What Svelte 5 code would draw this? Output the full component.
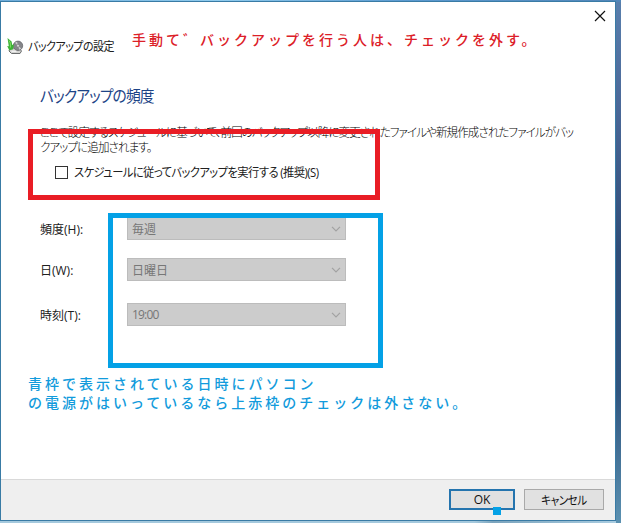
<script lang="ts">
	const fields = [
		{ id: 'frequency', label: '頻度(H):', value: '毎週' },
		{ id: 'day', label: '日(W):', value: '日曜日' },
		{ id: 'time', label: '時刻(T):', value: '19:00' }
	];

	let scheduled = $state(false);
</script>

<div class="desktop">
	<main class="window">
		<div class="titlebar">
			<button class="close" aria-label="閉じる">
				<svg width="12" height="12" viewBox="0 0 12 12">
					<path d="M1 1l10 10M11 1L1 11" stroke="#111" stroke-width="1.2" />
				</svg>
			</button>
		</div>

		<header>
			<svg class="app-icon" width="17" height="17" viewBox="0 0 17 17">
				<path d="M3 10h9l2.5 3-1.5 2.5H4.5L2 13z" fill="#d2d2d0" stroke="#6b6d6e" />
				<path d="M4.5 13.2h5" stroke="#fff" />
				<circle cx="11" cy="7.8" r="4.7" fill="#85868a" stroke="#66676b" stroke-width=".8" />
				<path d="M11 7.8L8 4.7l2-1zM11 7.8l3.3 2.8-2 1.2z" fill="#c9c9cb" />
				<circle cx="11" cy="7.8" r="1.3" fill="#eee" stroke="#666" stroke-width=".5" />
				<path d="M.5 0L4.6 3.5 5.2 7l1.8-.8-1.2 5.3-3.6.8L.2 8l1.6.3z" fill="#3db335" />
				<path d="M2 2.5L3.3 5l.2 4.5" fill="none" stroke="#7fdc62" />
			</svg>
			<span class="title">バックアップの設定</span>
		</header>

		<section class="content">
			<h1>バックアップの頻度</h1>
			<p>
				<span class="line">ここで設定するスケジュールに基づいて、前回のバックアップ以降に変更されたファイルや新規作成されたファイルがバッ</span>
				<span class="line">クアップに追加されます。</span>
			</p>

			<label class="schedule">
				<input type="checkbox" bind:checked={scheduled} />
				<span class="schedule-text">スケジュールに従ってバックアップを実行する (推奨)(S)</span>
			</label>

			<div class="fields">
				{#each fields as field}
					<div class="field {field.id}">
						<span class="label">{field.label}</span>
						<div class="select">
							<span class="value">{field.value}</span>
							<svg width="10" height="6" viewBox="0 0 10 6">
								<path d="M1 .8l4 4 4-4" fill="none" stroke="#a2a2a2" stroke-width="1.2" />
							</svg>
						</div>
					</div>
				{/each}
			</div>
		</section>

		<footer>
			<button class="btn ok">OK</button>
			<button class="btn cancel"><span>キャンセル</span></button>
		</footer>
	</main>

	<div class="frame red"></div>
	<div class="frame blue"></div>
	<div class="handle"></div>
	<div class="note red-note">手動て゛バックアップを行う人は、チェックを外す。</div>
	<div class="note blue-note">
		<div>青枠で表示されている日時にパソコン</div>
		<div>の電源がはいっているなら上赤枠のチェックは外さない。</div>
	</div>
</div>

<style>
	:global(body) {
		overflow: hidden;
	}

	.desktop {
		position: relative;
		box-sizing: border-box;
		width: 621px;
		height: 523px;
		padding: 1px 5px 2px 0;
		background:
			linear-gradient(90deg, #6eabd8, #8fcbed 35%, #5c9bd0 65%, #5286b8) top / 100% 2px no-repeat,
			linear-gradient(90deg, #a5c9dd 77%, #7ba4bd 80%, #a9cce0) left bottom / 616px 3px no-repeat,
			linear-gradient(#597fad, #4b6999 20%, #2f4d78 48%, #30557f 75%, #5b91b1);
		font-family: 'Open Sans', 'Noto Sans CJK JP', sans-serif;
		font-size: 12px;
		color: #202020;
	}

	.window {
		display: flex;
		flex-direction: column;
		box-sizing: border-box;
		height: 520px;
		border: 1px solid #397ba5;
		background: #fff;
	}

	.titlebar {
		display: flex;
		justify-content: flex-end;
		height: 28px;
	}

	.close {
		display: flex;
		width: 21px;
		height: 28px;
		padding: 8px 0 0;
		border: 0;
		background: none;
	}

	header {
		display: flex;
		align-items: center;
		gap: 4px;
		height: 32px;
		padding-left: 6px;
	}

	.title,
	h1,
	p,
	.schedule,
	.cancel {
		font-feature-settings: 'palt';
		white-space: nowrap;
	}

	.title,
	h1,
	.line,
	.schedule-text {
		transform-origin: left center;
	}

	.title {
		letter-spacing: -0.6px;
		transform: scaleX(0.92);
	}

	.content {
		flex: 1;
		padding: 22px 39px 0;
	}

	h1 {
		margin: 0;
		font-size: 16px;
		font-weight: 400;
		line-height: 24px;
		letter-spacing: -0.9px;
		color: #1d4486;
		transform: scaleX(0.92);
	}

	p {
		margin: 17px 0 0;
		font-weight: 300;
		line-height: 15px;
		color: #000;
	}

	.line {
		display: block;
		width: max-content;
		letter-spacing: -0.95px;
		transform: scaleX(0.96);
	}

	.schedule {
		display: flex;
		align-items: center;
		gap: 6px;
		height: 18px;
		margin-top: 8px;
		padding-left: 15px;
		letter-spacing: -0.6px;
	}

	.schedule-text {
		transform: scaleX(0.94);
	}

	input {
		appearance: none;
		box-sizing: border-box;
		width: 13px;
		height: 13px;
		margin: 0;
		border: 1px solid #333;
		background: #fff;
	}

	.fields {
		display: flex;
		flex-direction: column;
		margin-top: 36px;
	}

	.field {
		display: flex;
		align-items: center;
		height: 23px;
		margin-bottom: 18px;
	}

	.field.day {
		margin-bottom: 22px;
	}

	.label {
		width: 87px;
	}

	.select {
		display: flex;
		align-items: center;
		justify-content: space-between;
		box-sizing: border-box;
		width: 219px;
		height: 23px;
		padding: 0 4px;
		border: 1px solid #bcbcbc;
		background: #ccc;
		color: #777;
	}

	.time .value {
		letter-spacing: -0.8px;
	}

	footer {
		display: flex;
		justify-content: flex-end;
		gap: 9px;
		box-sizing: border-box;
		height: 41px;
		padding: 9px 11px 0 0;
		border-top: 1px solid #d9d9d9;
		background: #efefef;
	}

	.btn {
		display: flex;
		align-items: center;
		justify-content: center;
		box-sizing: border-box;
		height: 21px;
		padding: 0;
		border: 1px solid #a9a9a9;
		background: #e1e1e1;
		font-family: inherit;
		font-size: 12px;
		color: #111;
	}

	.ok {
		width: 66px;
		border: 2px solid #2474ae;
	}

	.cancel {
		width: 80px;
		letter-spacing: -0.5px;
	}

	.cancel span {
		transform: scaleX(0.88);
	}

	.frame,
	.handle,
	.note {
		position: absolute;
	}

	.frame {
		box-sizing: border-box;
		border: 5px solid;
		pointer-events: none;
	}

	.frame.red {
		left: 28px;
		top: 129px;
		width: 352px;
		height: 71px;
		border-color: #e91d25;
	}

	.frame.blue {
		left: 108px;
		top: 213px;
		width: 275px;
		height: 155px;
		border-color: #04a1e6;
	}

	.handle {
		left: 493px;
		top: 507px;
		width: 8px;
		height: 8px;
		background: #04a1e6;
	}

	.note {
		font-family: 'Noto Sans CJK JP', sans-serif;
		font-size: 14px;
		font-weight: 500;
		line-height: 19px;
		letter-spacing: 3px;
		white-space: nowrap;
	}

	.red-note {
		left: 132px;
		top: 30px;
		color: #dc2028;
	}

	.blue-note {
		left: 28px;
		top: 374px;
		color: #129bdc;
	}
</style>
